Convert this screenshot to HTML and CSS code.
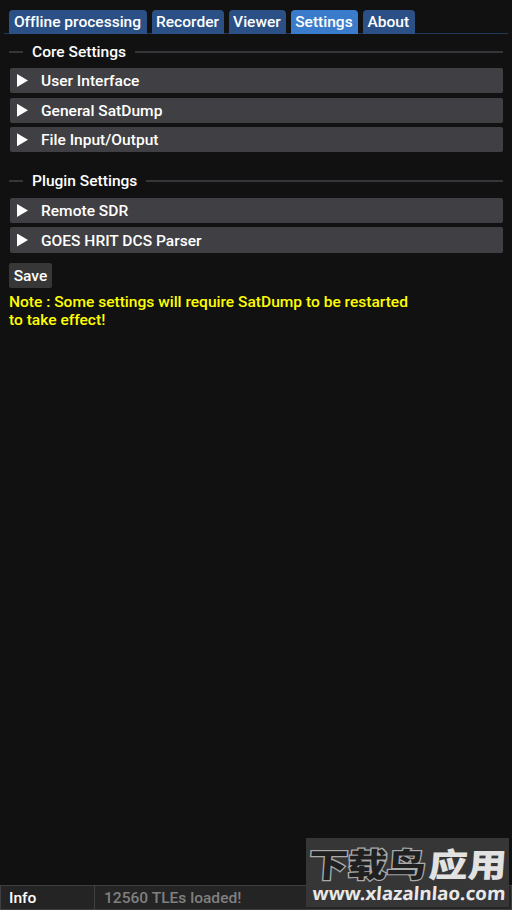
FILE: index.html
```html
<!DOCTYPE html>
<html lang="en">
<head>
<meta charset="utf-8">
<title>SatDump</title>
<link rel="stylesheet" href="styles.css">
</head>
<body>
<nav class="tabs">
  <button class="tab tab-offline">Offline processing</button>
  <button class="tab tab-recorder">Recorder</button>
  <button class="tab tab-viewer">Viewer</button>
  <button class="tab tab-settings active">Settings</button>
  <button class="tab tab-about">About</button>
</nav>
<main class="content">
  <h2 class="separator"><span>Core Settings</span></h2>
  <section class="group">
    <div class="row"><i class="arrow"></i><span>User Interface</span></div>
    <div class="row"><i class="arrow"></i><span>General SatDump</span></div>
    <div class="row"><i class="arrow"></i><span>File Input/Output</span></div>
  </section>
  <h2 class="separator plugins"><span>Plugin Settings</span></h2>
  <section class="group">
    <div class="row"><i class="arrow"></i><span>Remote SDR</span></div>
    <div class="row"><i class="arrow"></i><span>GOES HRIT DCS Parser</span></div>
  </section>
  <button class="save">Save</button>
  <p class="note">Note : Some settings will require SatDump to be restarted<br>to take effect!</p>
</main>
<footer class="status">
  <span class="level">Info</span>
  <span class="message">12560 TLEs loaded!</span>
</footer>
<aside class="watermark">
  <svg width="203" height="69" viewBox="0 0 203 69">
    <g class="brand" transform="translate(0 40) skewX(-4)">
      <text class="outlined" x="2" y="-1" textLength="117" lengthAdjust="spacingAndGlyphs">下载鸟</text>
      <text class="filled" x="122" y="-1" textLength="78" lengthAdjust="spacingAndGlyphs">应用</text>
    </g>
    <text class="url" transform="translate(6 62) skewX(-4)" textLength="193" lengthAdjust="spacingAndGlyphs">www.xlazalnlao.com</text>
  </svg>
</aside>
</body>
</html>
```
FILE: styles.css
```css
* { box-sizing: border-box; }

body {
  margin: 0;
  height: 910px;
  display: flex;
  flex-direction: column;
  position: relative;
  overflow: hidden;
  background: #111;
  color: #fff;
  font: 500 15.55px/18px Roboto, sans-serif;
  font-variant-ligatures: none;
}

button {
  border: 0;
  padding: 0;
  color: inherit;
  font: inherit;
  font-variant-ligatures: none;
}

.tabs {
  display: flex;
  gap: 4.7px;
  height: 34px;
  margin: 0 4px;
  padding: 10px 5px 0;
  border-bottom: 1px solid #20395a;
}

.tab {
  height: 24px;
  padding-right: 1px;
  border-radius: 4px 4px 0 0;
  background: #2a5085;
  white-space: nowrap;
}

.tab.active { background: #3b7bcb; }
.tab-offline { width: 138px; }
.tab-recorder { width: 72.6px; }
.tab-viewer { width: 57px; }
.tab-settings { width: 67.5px; }
.tab-about { width: 52px; }

.content {
  flex: 1;
  padding: 9px 9px 0;
}

.separator {
  display: flex;
  align-items: center;
  gap: 9px;
  height: 18px;
  margin: 0 0 7px;
  font: inherit;
}

.separator::before,
.separator::after {
  content: "";
  height: 2px;
  background: #36363a;
}

.separator::before { width: 14px; }
.separator::after { flex: 1; }

.plugins {
  margin-top: 20px;
  margin-bottom: 7.6px;
}

.group {
  display: grid;
  gap: 4.5px;
  padding-left: 1px;
}

.row {
  display: flex;
  align-items: center;
  height: 25.1px;
  padding-left: 7px;
  border-radius: 2px;
  background: #403f43;
}

.row span { padding-top: 1px; }

.arrow {
  width: 11px;
  height: 13px;
  margin-right: 13px;
  background: #fff;
  clip-path: polygon(0 0, 100% 50%, 0 100%);
}

.save {
  display: block;
  width: 43px;
  height: 25px;
  margin-top: 10.3px;
  padding-top: 1px;
  border-radius: 2px;
  background: #373737;
}

.note {
  margin: 5px 0 0;
  color: #ff0;
  white-space: nowrap;
}

.status {
  display: flex;
  height: 25px;
  border: 1px solid #3e3e43;
  background: #242424;
  line-height: 24px;
}

.level {
  width: 94px;
  padding-left: 8px;
  border-right: 1px solid #3e3e43;
}

.message {
  padding-left: 9px;
  color: #808080;
}

.watermark {
  position: absolute;
  left: 306px;
  top: 838px;
  width: 203px;
  height: 69px;
  background: #363636;
}

.watermark svg {
  display: block;
  overflow: visible;
}

.brand {
  font: 900 33px "Noto Sans CJK SC", sans-serif;
}

.outlined {
  fill: #202020;
  stroke: #aaa;
  stroke-width: 2.4px;
  paint-order: stroke;
}

.filled { fill: #e2e2e2; }

.url {
  fill: #e8e8e8;
  font: 700 18.5px "Noto Sans", sans-serif;
}
```
